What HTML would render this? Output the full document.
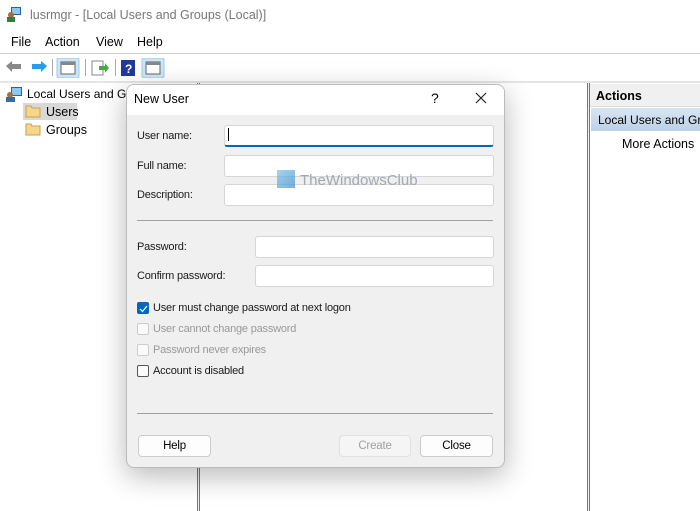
<!DOCTYPE html><html><head><style>
*{box-sizing:border-box;margin:0;padding:0}
body{width:700px;height:511px;overflow:hidden;background:#fff;font-family:"Liberation Sans",sans-serif;font-size:12px;color:#000;position:relative}
.a{position:absolute}
.inp{position:absolute;background:#fff;border:1px solid #d6d6d6;border-radius:3px;height:22px}
.lbl{position:absolute;font-size:11px;color:#1a1a1a;letter-spacing:-0.2px;white-space:nowrap}
.cb{position:absolute;width:12px;height:12px;border:1px solid #555;border-radius:2px;background:#fafafa}
.btn{position:absolute;height:22px;border:1px solid #ccc;border-radius:4px;background:#fdfdfd;text-align:center;line-height:20px;font-size:11.5px;letter-spacing:-0.2px}
</style></head><body>
<div class="a" style="left:0;top:0;width:700px;height:30px;background:#fff"></div>
<svg class="a" style="left:6px;top:6px" width="16" height="16"><rect x="5" y="1" width="10" height="8" fill="#2b5fa8"/><rect x="6" y="2" width="8" height="6" fill="#8cc8f0"/><circle cx="5" cy="9" r="3" fill="#a07040"/><rect x="1" y="11" width="8" height="5" fill="#3a7a3a"/></svg>
<div class="a" style="left:30px;top:8px;font-size:12.5px;color:#777">lusrmgr - [Local Users and Groups (Local)]</div>
<div class="a" style="left:11px;top:35px;font-size:12.5px">File</div>
<div class="a" style="left:45px;top:35px;font-size:12.5px">Action</div>
<div class="a" style="left:96px;top:35px;font-size:12.5px">View</div>
<div class="a" style="left:137px;top:35px;font-size:12.5px">Help</div>
<div class="a" style="left:0;top:53px;width:700px;height:1px;background:#ccc"></div>
<div class="a" style="left:0;top:54px;width:700px;height:27px;background:#fff"></div>
<svg class="a" style="left:4px;top:58px" width="170" height="20">
<path d="M2 8 L8 3 V6 H17 V11 H8 V14 Z" fill="#888"/>
<path d="M43 8 L37 3 V6 H28 V11 H37 V14 Z" fill="#2a9de0"/>
<rect x="48" y="1" width="1" height="17" fill="#aaa"/>
<rect x="53" y="0" width="22" height="20" rx="2" fill="#cde6f7" stroke="#99c9ef"/>
<rect x="57" y="4" width="14" height="12" fill="#fff" stroke="#666"/><rect x="57" y="4" width="14" height="3" fill="#888"/>
<rect x="81" y="1" width="1" height="17" fill="#aaa"/>
<rect x="88" y="3" width="11" height="14" fill="#fff" stroke="#888"/><path d="M95 8h6v-3l4 5-4 5v-3h-6z" fill="#4a4"/>
<rect x="111" y="1" width="1" height="17" fill="#aaa"/>
<rect x="117" y="2" width="14" height="16" fill="#2238a0"/><text x="121" y="15" fill="#fff" font-size="12" font-weight="bold">?</text>
<rect x="138" y="0" width="22" height="20" rx="2" fill="#cde6f7" stroke="#99c9ef"/>
<rect x="142" y="4" width="14" height="12" fill="#fff" stroke="#666"/><rect x="142" y="4" width="14" height="3" fill="#888"/>
</svg>
<div class="a" style="left:0;top:81px;width:700px;height:2px;background:#e5e5e5"></div>
<div class="a" style="left:197px;top:83px;width:3px;height:428px;border-left:1px solid #777;border-right:1px solid #777;background:#f0f0f0"></div>
<div class="a" style="left:587px;top:83px;width:3px;height:428px;border-left:1px solid #777;border-right:1px solid #777;background:#f0f0f0"></div>
<svg class="a" style="left:5px;top:86px" width="18" height="16"><rect x="6" y="1" width="11" height="9" fill="#2b5fa8"/><rect x="7" y="2" width="9" height="7" fill="#8cc8f0"/><circle cx="5" cy="9" r="3" fill="#a07040"/><rect x="1" y="11" width="9" height="5" fill="#3a6a9a"/></svg>
<div class="a" style="left:27px;top:87px;font-size:12px;white-space:nowrap">Local Users and Gro</div>
<div class="a" style="left:23px;top:103px;width:54px;height:17px;background:#d9d9d9"></div>
<svg class="a" style="left:25px;top:104px" width="16" height="14"><path d="M1 2h5l1 2h8v9H1z" fill="#f5d68a" stroke="#c9a24a"/></svg>
<svg class="a" style="left:25px;top:122px" width="16" height="14"><path d="M1 2h5l1 2h8v9H1z" fill="#f5d68a" stroke="#c9a24a"/></svg>
<div class="a" style="left:46px;top:105px;font-size:12.5px">Users</div>
<div class="a" style="left:46px;top:123px;font-size:12.5px">Groups</div>
<div class="a" style="left:590px;top:84px;width:110px;height:23px;background:#f0f0f0;border-bottom:1px solid #ddd"></div>
<div class="a" style="left:596px;top:89px;font-weight:bold;font-size:12.5px">Actions</div>
<div class="a" style="left:591px;top:108px;width:109px;height:23px;background:linear-gradient(#d9e6f3,#bcd0e6)"></div>
<div class="a" style="left:598px;top:113px;font-size:12px;white-space:nowrap">Local Users and Gro</div>
<div class="a" style="left:622px;top:137px;font-size:12.5px">More Actions</div>
<div class="a" style="left:126px;top:84px;width:379px;height:384px;border-radius:8px;background:#f0f0f0;border:1px solid #bbb;box-shadow:0 8px 28px rgba(0,0,0,.28);overflow:hidden">
<div style="height:30px;background:#fff"></div></div>
<div class="a" style="left:134px;top:92px;font-size:12.5px">New User</div>
<div class="a" style="left:431px;top:90px;font-size:14px">?</div>
<svg class="a" style="left:475px;top:92px" width="12" height="12"><path d="M1 1L11 11M11 1L1 11" stroke="#222" stroke-width="1.2"/></svg>
<div class="lbl" style="left:137px;top:130px">User name:</div>
<div class="lbl" style="left:137px;top:160px">Full name:</div>
<div class="lbl" style="left:137px;top:189px">Description:</div>
<div class="inp" style="left:224px;top:125px;width:270px;border-bottom:2px solid #0067c0"></div>
<div class="a" style="left:228px;top:128px;width:1px;height:13px;background:#000"></div>
<div class="inp" style="left:224px;top:155px;width:270px"></div>
<div class="inp" style="left:224px;top:184px;width:270px"></div>
<div class="a" style="left:277px;top:170px;width:18px;height:18px;background:linear-gradient(135deg,#7ac0ea,#3d8fd0);opacity:.7"></div>
<div class="a" style="left:300px;top:172px;font-size:15px;color:#a0a8b4">TheWindowsClub</div>
<div class="a" style="left:137px;top:220px;width:356px;height:1px;background:#a0a0a0"></div>
<div class="lbl" style="left:137px;top:241px">Password:</div>
<div class="lbl" style="left:137px;top:270px">Confirm password:</div>
<div class="inp" style="left:255px;top:236px;width:239px"></div>
<div class="inp" style="left:255px;top:265px;width:239px"></div>
<div class="cb" style="left:137px;top:302px;background:#0067c0;border-color:#0067c0"></div>
<svg class="a" style="left:139px;top:304px" width="9" height="9"><path d="M1 5L3.5 7.5L8 2" stroke="#fff" fill="none" stroke-width="1.2"/></svg>
<div class="lbl" style="left:153px;top:302px">User must change password at next logon</div>
<div class="cb" style="left:137px;top:323px;border-color:#ccc"></div>
<div class="lbl" style="left:153px;top:323px;color:#999">User cannot change password</div>
<div class="cb" style="left:137px;top:344px;border-color:#ccc"></div>
<div class="lbl" style="left:153px;top:344px;color:#999">Password never expires</div>
<div class="cb" style="left:137px;top:365px"></div>
<div class="lbl" style="left:153px;top:365px">Account is disabled</div>
<div class="a" style="left:137px;top:413px;width:356px;height:1px;background:#a0a0a0"></div>
<div class="btn" style="left:138px;top:435px;width:73px">Help</div>
<div class="btn" style="left:339px;top:435px;width:72px;color:#a0a0a0;border-color:#e0e0e0;background:#f5f5f5">Create</div>
<div class="btn" style="left:420px;top:435px;width:73px">Close</div>
</body></html>
